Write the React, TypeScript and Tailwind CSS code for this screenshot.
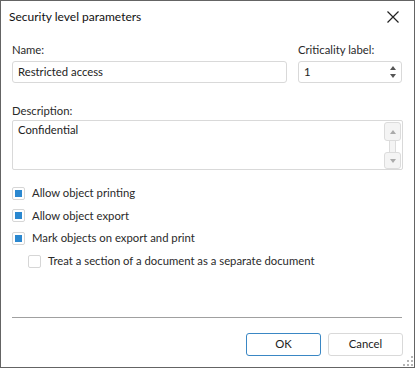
import React from 'react';

const font = { fontFamily: 'Lato, "Noto Sans", sans-serif' };

const Check: React.FC<{ checked?: boolean; label: string; indent?: boolean }> = ({ checked, label, indent }) => (
  <div className={`flex items-center h-[22.6px] ${indent ? 'pl-[16px]' : ''}`}>
    <div className="w-[13px] h-[13px] border border-[#d6d6d6] rounded-[2px] bg-white flex items-center justify-center">
      {checked && <div className="w-[7px] h-[7px] bg-[#2b88d0]" />}
    </div>
    <span className="ml-[7px] text-[11.3px] leading-[16px] text-[#2a2a2a]">{label}</span>
  </div>
);

export default function App() {
  return (
    <div style={font} className="w-[415px] h-[368px] bg-white border border-[#646464] flex flex-col relative overflow-hidden">
      {/* Title bar */}
      <div className="flex items-center justify-between h-[32px] pl-[8px] pr-[15px]">
        <span className="text-[12px] text-[#111]">Security level parameters</span>
        <svg width="12" height="12" viewBox="0 0 12 12" className="text-[#222]">
          <path d="M0.5 0.5L11.5 11.5M11.5 0.5L0.5 11.5" stroke="currentColor" strokeWidth="1.2" />
        </svg>
      </div>

      <div className="flex flex-col px-[11px]">
        {/* Name / Criticality */}
        <div className="flex gap-[11px] mt-[9px]">
          <div className="flex flex-col w-[275px]">
            <span className="text-[11.3px] leading-[16px] text-[#2a2a2a]">Name:</span>
            <div className="mt-[3px] h-[22px] border border-[#d9d9d9] rounded-[3px] flex items-center px-[5px] text-[11.3px] text-[#222]">
              Restricted access
            </div>
          </div>
          <div className="flex flex-col w-[104px]">
            <span className="text-[11.3px] leading-[16px] text-[#2a2a2a]">Criticality label:</span>
            <div className="mt-[3px] h-[22px] border border-[#d9d9d9] rounded-[3px] flex items-center justify-between pl-[5px] pr-[5px] text-[11.3px] text-[#222]">
              <span>1</span>
              <div className="flex flex-col gap-[4px]">
                <svg width="6" height="4" viewBox="0 0 6 4"><path d="M0 4L3 0L6 4Z" fill="#555" /></svg>
                <svg width="6" height="4" viewBox="0 0 6 4"><path d="M0 0L3 4L6 0Z" fill="#555" /></svg>
              </div>
            </div>
          </div>
        </div>

        {/* Description */}
        <span className="mt-[20px] text-[11.3px] leading-[16px] text-[#2a2a2a]">Description:</span>
        <div className="mt-[1px] h-[50px] border border-[#d9d9d9] rounded-[2px] flex justify-between pl-[5px] pr-[1px] pt-[1px]">
          <span className="text-[11.3px] leading-[16px] text-[#222]">Confidential</span>
          <div className="flex flex-col items-center w-[17px]">
            <div className="w-[17px] h-[19px] border border-[#dcdcdc] rounded-[3px] bg-[#f4f4f4] flex items-center justify-center">
              <svg width="6" height="4" viewBox="0 0 6 4"><path d="M0 4L3 0L6 4Z" fill="#aaa" /></svg>
            </div>
            <div className="w-[7px] h-[11px] border-x border-[#dcdcdc] bg-[#f4f4f4]" />
            <div className="w-[17px] h-[17px] border border-[#dcdcdc] rounded-[3px] bg-[#f4f4f4] flex items-center justify-center">
              <svg width="6" height="4" viewBox="0 0 6 4"><path d="M0 0L3 4L6 0Z" fill="#aaa" /></svg>
            </div>
          </div>
        </div>

        {/* Options */}
        <div className="flex flex-col mt-[12px]">
          <Check checked label="Allow object printing" />
          <Check checked label="Allow object export" />
          <Check checked label="Mark objects on export and print" />
          <Check indent label="Treat a section of a document as a separate document" />
        </div>

        <div className="mt-[45px] h-px bg-[#a0a0a0] mr-[1px]" />

        {/* Buttons */}
        <div className="flex justify-end gap-[7px] mt-[15px]">
          <button className="w-[75px] h-[23px] border border-[#3a87c4] rounded-[3px] bg-white text-[11.3px] text-[#222]">OK</button>
          <button className="w-[75px] h-[23px] border border-[#d9d9d9] rounded-[3px] bg-white text-[11.3px] text-[#222]">Cancel</button>
        </div>
      </div>

      {/* Resize grip */}
      <svg width="10" height="10" viewBox="0 0 10 10" className="absolute right-[1px] bottom-[1px]">
        <rect x="8" y="0" width="2" height="2" fill="#b5b5b5" />
        <rect x="4" y="4" width="2" height="2" fill="#b5b5b5" />
        <rect x="8" y="4" width="2" height="2" fill="#b5b5b5" />
        <rect x="0" y="8" width="2" height="2" fill="#b5b5b5" />
        <rect x="4" y="8" width="2" height="2" fill="#b5b5b5" />
        <rect x="8" y="8" width="2" height="2" fill="#b5b5b5" />
      </svg>
    </div>
  );
}
